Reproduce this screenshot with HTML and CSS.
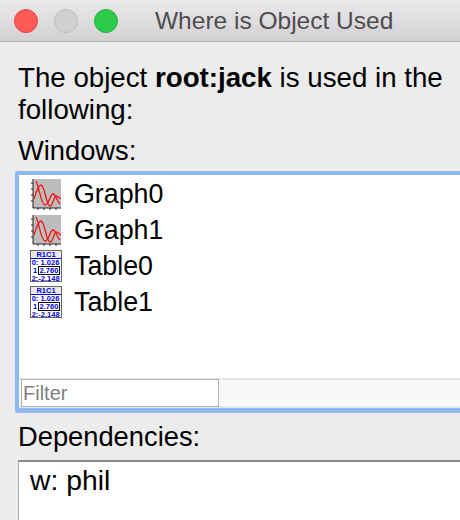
FILE: index.html
```html
<!DOCTYPE html>
<html lang="en">
<head>
    <meta charset="UTF-8">
    <title>Where is Object Used</title>
    <link rel="stylesheet" href="styles.css">
</head>
<body>
    <header class="titlebar">
        <div class="lights">
            <span class="light light-close"></span>
            <span class="light light-min"></span>
            <span class="light light-zoom"></span>
        </div>
        <h1 class="title">Where is Object Used</h1>
    </header>

    <main class="content">
        <p class="intro">The object <b>root:jack</b> is used in the following:</p>
        <h2 class="label">Windows:</h2>

        <div class="window-list">
            <ul class="items">
                <li class="item">
                    <svg class="item-icon" viewBox="0 0 32 32">
                        <rect x="3" y="1" width="28" height="29" fill="#bdbdbd"/>
                        <path d="M3 1V30H31M1 5H3M1 11H3M1 17H3M1 23H3M8 30V32M14 30V32M20 30V32M26 30V32" fill="none" stroke="#222"/>
                        <path d="M6 3C9 8 11 27 15 27C19 27 20 16 23 16C26 16 27 24 30 26" fill="none" stroke="#f01414" stroke-width="1.300"/>
                        <path d="M4 21C6 15 8 7 11 7C15 7 16 28 20 28C23 28 24 18 26 18C28 18 29 20 31 21" fill="none" stroke="#f01414" stroke-width="1.300"/>
                    </svg>
                    <span>Graph0</span>
                </li>
                <li class="item">
                    <svg class="item-icon" viewBox="0 0 32 32">
                        <rect x="3" y="1" width="28" height="29" fill="#bdbdbd"/>
                        <path d="M3 1V30H31M1 5H3M1 11H3M1 17H3M1 23H3M8 30V32M14 30V32M20 30V32M26 30V32" fill="none" stroke="#222"/>
                        <path d="M6 3C9 8 11 27 15 27C19 27 20 16 23 16C26 16 27 24 30 26" fill="none" stroke="#f01414" stroke-width="1.300"/>
                        <path d="M4 21C6 15 8 7 11 7C15 7 16 28 20 28C23 28 24 18 26 18C28 18 29 20 31 21" fill="none" stroke="#f01414" stroke-width="1.300"/>
                    </svg>
                    <span>Graph1</span>
                </li>
                <li class="item">
                    <svg class="item-icon" viewBox="0 0 32 32">
                        <rect x="0.500" y="0.500" width="31" height="31" fill="#fff" stroke="#666"/>
                        <rect x="1" y="1" width="30" height="7.500" fill="#e8e8e8"/>
                        <path d="M1 8.500H31" stroke="#0000e0"/>
                        <rect x="8.500" y="16.500" width="21" height="8" fill="none" stroke="#111"/>
                        <text class="table-text" x="16" y="7">R1C1</text>
                        <text class="table-text" x="5" y="15">0:</text>
                        <text class="table-text" x="5" y="23">1</text>
                        <text class="table-text" x="5" y="31">2:</text>
                        <text class="table-text" x="20" y="15">1.026</text>
                        <text class="table-text" x="19" y="23">2.760</text>
                        <text class="table-text" x="19" y="31">-2.148</text>
                    </svg>
                    <span>Table0</span>
                </li>
                <li class="item">
                    <svg class="item-icon" viewBox="0 0 32 32">
                        <rect x="0.500" y="0.500" width="31" height="31" fill="#fff" stroke="#666"/>
                        <rect x="1" y="1" width="30" height="7.500" fill="#e8e8e8"/>
                        <path d="M1 8.500H31" stroke="#0000e0"/>
                        <rect x="8.500" y="16.500" width="21" height="8" fill="none" stroke="#111"/>
                        <text class="table-text" x="16" y="7">R1C1</text>
                        <text class="table-text" x="5" y="15">0:</text>
                        <text class="table-text" x="5" y="23">1</text>
                        <text class="table-text" x="5" y="31">2:</text>
                        <text class="table-text" x="20" y="15">1.026</text>
                        <text class="table-text" x="19" y="23">2.760</text>
                        <text class="table-text" x="19" y="31">-2.148</text>
                    </svg>
                    <span>Table1</span>
                </li>
            </ul>
            <div class="filter-row">
                <input class="filter" type="text" placeholder="Filter">
            </div>
        </div>

        <h2 class="label label-deps">Dependencies:</h2>
        <div class="deps">w: phil</div>
    </main>
</body>
</html>
```

FILE: styles.css
```css
html, body {
    margin: 0;
    padding: 0;
    height: 520px;
    overflow: hidden;
    background-color: #ececec;
    font-family: "Liberation Sans", Arial, sans-serif;
    color: #000;
}

/* Title bar */
.titlebar {
    display: flex;
    align-items: center;
    height: 41px;
    border-bottom: 1px solid #b4b4b4;
    background: linear-gradient(#ebe9eb, #d2d0d2);
}

.lights {
    display: flex;
    gap: 16px;
    margin-left: 14px;
}

.light {
    width: 24px;
    height: 24px;
    box-sizing: border-box;
    border-radius: 50%;
    border: 1px solid;
}

.light-close {
    background-color: #fc5b57;
    border-color: #e5443f;
}

.light-min {
    background-color: #d0d0d0;
    border-color: #bcbcbc;
}

.light-zoom {
    background-color: #2dcb4a;
    border-color: #25b13c;
}

.title {
    margin: 0 0 0 37px;
    font-size: 24.5px;
    font-weight: normal;
    color: #4f4c4f;
    white-space: nowrap;
}

/* Main */
.content {
    padding: 20px 0 0 18px;
}

.intro {
    margin: 0;
    width: 442px;
    font-size: 27.7px;
    line-height: 32px;
}

.label {
    margin: 9px 0 0;
    font-size: 27.3px;
    font-weight: normal;
    line-height: 32px;
}

.window-list {
    display: flex;
    flex-direction: column;
    margin: 4px 0 0 -3px;
    height: 242px;
    box-sizing: border-box;
    border: 4px solid #8fbaec;
    border-bottom-width: 5px;
    border-right: none;
    border-radius: 3px 0 0 3px;
    background-color: #fff;
}

.items {
    flex: 1;
    list-style: none;
    margin: 0;
    padding: 1px 0 0 11px;
}

.item {
    display: flex;
    align-items: center;
    gap: 12px;
    height: 36px;
    font-size: 26.8px;
}

.item-icon {
    width: 32px;
    height: 32px;
}

.table-text {
    font-family: "Liberation Sans", Arial, sans-serif;
    font-size: 7.5px;
    font-weight: bold;
    fill: #0000e0;
    text-anchor: middle;
}

.filter-row {
    height: 30px;
    box-sizing: border-box;
    border-top: 2px solid #e6e6e6;
    border-bottom: 2px solid #e6e6e6;
    background-color: #f9f9f9;
}

.filter {
    display: block;
    width: 198px;
    height: 28px;
    margin: -1px 0 0 2px;
    padding: 0 1px;
    box-sizing: border-box;
    border: 1px solid #b0b0b0;
    background-color: #fff;
    font-family: "Liberation Sans", Arial, sans-serif;
    font-size: 20px;
    outline: none;
}

.filter::placeholder {
    color: #808080;
    opacity: 1;
}

.label-deps {
    margin-top: 8px;
}

.deps {
    height: 80px;
    margin-top: 7px;
    padding: 1px 0 0 11px;
    border-top: 2px solid #8a8a8a;
    border-left: 1px solid #b0b0b0;
    background-color: #fff;
    font-size: 28.3px;
    line-height: 35px;
}
```
